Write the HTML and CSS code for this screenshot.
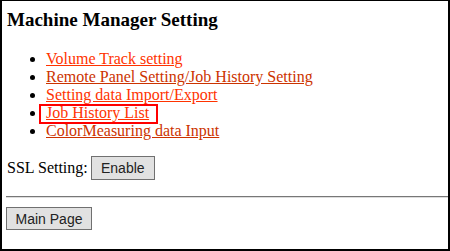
FILE: index.html
```html
<!DOCTYPE html>
<html lang="en">
<head>
    <meta charset="UTF-8">
    <title>Machine Manager Setting</title>
    <link rel="stylesheet" href="styles.css">
</head>
<body>
    <div class="frame">
        <h3 class="title">Machine Manager Setting</h3>

        <!-- Setting links -->
        <ul class="menu">
            <li><a href="#" class="link">Volume Track setting</a></li>
            <li><a href="#" class="link visited">Remote Panel Setting/Job History Setting</a></li>
            <li><a href="#" class="link">Setting data Import/Export</a></li>
            <li><a href="#" class="link marked">Job History List</a></li>
            <li><a href="#" class="link visited">ColorMeasuring data Input</a></li>
        </ul>

        <div class="ssl-row">
            <span>SSL Setting:</span>
            <button class="btn btn-enable">Enable</button>
        </div>

        <hr class="divider">

        <button class="btn btn-main">Main Page</button>
    </div>
</body>
</html>
```

FILE: styles.css
```css
* {
    margin: 0;
    padding: 0;
    box-sizing: border-box;
}

body {
    font-family: "Liberation Serif", "Times New Roman", serif;
    font-size: 16px;
    background: white;
    color: #000;
}

.frame {
    width: 450px;
    height: 251px;
    border-style: solid;
    border-color: #000;
    border-width: 1px 2px 2px 2px;
    padding: 8px 0 0 4px;
}

.title {
    font-size: 19px;
    font-weight: bold;
    line-height: 21px;
    padding-left: 1px;
}

.menu {
    margin-top: 20px;
    padding-left: 40px;
    line-height: 18px;
}

.menu li::marker {
    color: #000;
}

.link {
    color: #f30;
}

.link.visited {
    color: #c30;
}

.marked {
    position: relative;
}

.marked::after {
    content: '';
    position: absolute;
    left: -7px;
    right: -9px;
    top: 0;
    bottom: -3px;
    border: 2px solid #f00;
}

.ssl-row {
    display: flex;
    align-items: center;
    gap: 3px;
    margin-top: 16px;
    padding-left: 1px;
    line-height: 18px;
}

.btn {
    font-family: "Liberation Sans", Arial, sans-serif;
    font-size: 14px;
    color: #222;
    background: #e1e1e1;
    border: 1px solid #707070;
}

.btn-enable {
    width: 64px;
    height: 24px;
}

.divider {
    margin-top: 16px;
    border: none;
    border-top: 1px solid #777;
    border-bottom: 1px solid #ddd;
    height: 2px;
}

.btn-main {
    margin-top: 9px;
    width: 86px;
    height: 23px;
}
```
